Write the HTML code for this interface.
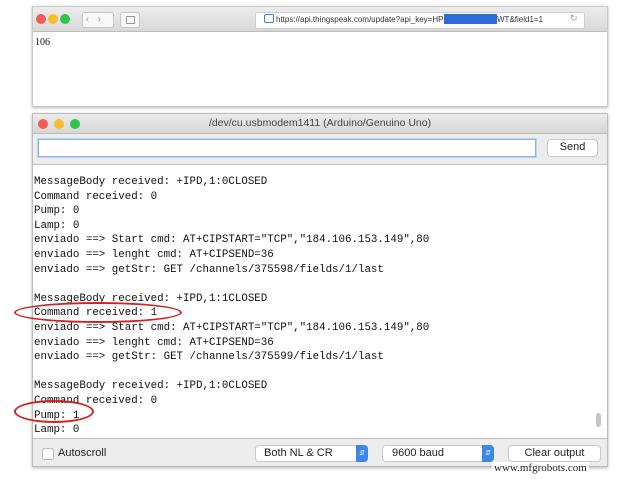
<!DOCTYPE html>
<html><head><style>
body{margin:0;width:620px;height:479px;background:#fff;position:relative;overflow:hidden;font-family:"Liberation Sans",sans-serif}
.a{position:absolute}
.dot{position:absolute;width:10px;height:10px;border-radius:50%}
.mono{font-family:"Liberation Mono",monospace;font-size:10.8px;color:#111;white-space:pre;line-height:14.6px}
.btn{position:absolute;background:#fff;border:1px solid #c8c8c8;border-radius:4px;font-size:11px;color:#222;box-sizing:border-box;line-height:15px}
</style></head><body>
<div class="a" style="left:32px;top:6px;width:576px;height:101px;border:1px solid #c9c9c9;box-shadow:0 1px 3px rgba(0,0,0,.3);background:#fff;box-sizing:border-box"></div>
<div class="a" style="left:33px;top:7px;width:574px;height:24px;background:linear-gradient(#ececec,#d8d8d8);border-bottom:1px solid #bdbdbd"></div>
<div class="dot" style="left:36px;top:14px;background:#f25b57"></div>
<div class="dot" style="left:48px;top:14px;background:#f6bd2f"></div>
<div class="dot" style="left:60px;top:14px;background:#2ec54a"></div>
<div class="a" style="left:82px;top:12px;width:30px;height:14px;background:#f8f8f8;border:1px solid #c6c6c6;border-radius:3px;font-size:10px;color:#999;line-height:14px">&nbsp;&lsaquo;&nbsp;&nbsp;&nbsp;&rsaquo;</div>
<div class="a" style="left:120px;top:12px;width:18px;height:14px;background:#f8f8f8;border:1px solid #c6c6c6;border-radius:3px"></div>
<div class="a" style="left:126px;top:16px;width:7px;height:6px;border:1px solid #999"></div>
<div class="a" style="left:255px;top:12px;width:328px;height:15px;background:#fff;border-radius:3px;border:1px solid #d0d0d0"></div>
<div class="a" style="left:264px;top:14px;width:8px;height:7px;border:1px solid #3a7fd8;border-radius:2px"></div>
<div class="a" style="left:276px;top:13px;font-size:8px;color:#333;line-height:13px">https://api.thingspeak.com/update?api_key=HP</div>
<div class="a" style="left:444px;top:14px;width:53px;height:10px;background:#2f6bd6"></div>
<div class="a" style="left:497px;top:13px;font-size:8px;color:#333;line-height:13px">WT&amp;field1=1</div>
<div class="a" style="left:570px;top:13px;font-size:9px;color:#999">&#8635;</div>
<div class="a" style="left:35px;top:37px;font-family:'Liberation Serif',serif;font-size:10px;color:#111">106</div>
<div class="a" style="left:32px;top:113px;width:576px;height:354px;border:1px solid #bdbdbd;background:#ececec;box-shadow:0 1px 3px rgba(0,0,0,.3);box-sizing:border-box"></div>
<div class="a" style="left:33px;top:114px;width:574px;height:19px;background:linear-gradient(#ebebeb,#d6d6d6);border-bottom:1px solid #bcbcbc"></div>
<div class="dot" style="left:38px;top:119px;background:#f25b57"></div>
<div class="dot" style="left:54px;top:119px;background:#f6bd2f"></div>
<div class="dot" style="left:70px;top:119px;background:#2ec54a"></div>
<div class="a" style="left:33px;top:117px;width:574px;text-align:center;font-size:10.5px;color:#444">/dev/cu.usbmodem1411 (Arduino/Genuino Uno)</div>
<div class="a" style="left:38px;top:139px;width:498px;height:18px;background:#fff;border:1px solid #8db3e6;box-shadow:0 0 0 1px #bcd3f2;box-sizing:border-box"></div>
<div class="btn" style="left:547px;top:139px;width:51px;height:18px;text-align:center;font-size:11px">Send</div>
<div class="a" style="left:33px;top:164px;width:574px;height:273px;background:#fff;border-top:1px solid #c0c0c0;border-bottom:1px solid #c0c0c0"></div>
<div class="a" style="left:596px;top:413px;width:5px;height:14px;background:#c4c4c4;border-radius:3px"></div>
<div class="a mono" style="left:34px;top:175px">MessageBody received: +IPD,1:0CLOSED
Command received: 0
Pump: 0
Lamp: 0
enviado ==> Start cmd: AT+CIPSTART="TCP","184.106.153.149",80
enviado ==> lenght cmd: AT+CIPSEND=36
enviado ==> getStr: GET /channels/375598/fields/1/last

MessageBody received: +IPD,1:1CLOSED
Command received: 1
enviado ==> Start cmd: AT+CIPSTART="TCP","184.106.153.149",80
enviado ==> lenght cmd: AT+CIPSEND=36
enviado ==> getStr: GET /channels/375599/fields/1/last

MessageBody received: +IPD,1:0CLOSED
Command received: 0
Pump: 1
Lamp: 0</div>
<div class="a" style="left:14px;top:302px;width:168px;height:21px;border:2px solid #d42020;border-radius:50%;box-sizing:border-box"></div>
<div class="a" style="left:14px;top:400px;width:80px;height:23px;border:2px solid #d42020;border-radius:50%;box-sizing:border-box"></div>
<div class="a" style="left:42px;top:448px;width:10px;height:10px;background:#fff;border:1px solid #bbb;border-radius:2px"></div>
<div class="a" style="left:58px;top:447px;font-size:11px;color:#222">Autoscroll</div>
<div class="btn" style="left:255px;top:445px;width:113px;height:17px;padding-left:8px">Both NL &amp; CR</div>
<div class="a" style="left:356px;top:445px;width:12px;height:17px;background:#3d87ea;border-radius:0 4px 4px 0;color:#fff;font-size:7px;text-align:center;line-height:17px">&#8693;</div>
<div class="btn" style="left:382px;top:445px;width:112px;height:17px;padding-left:9px">9600 baud</div>
<div class="a" style="left:482px;top:445px;width:12px;height:17px;background:#3d87ea;border-radius:0 4px 4px 0;color:#fff;font-size:7px;text-align:center;line-height:17px">&#8693;</div>
<div class="btn" style="left:508px;top:445px;width:93px;height:17px;text-align:center">Clear output</div>
<div class="a" style="left:492px;top:462px;font-family:'Liberation Serif',serif;font-size:11px;color:#222;background:#fff;padding:0 2px">www.mfgrobots.com</div>
</body></html>
